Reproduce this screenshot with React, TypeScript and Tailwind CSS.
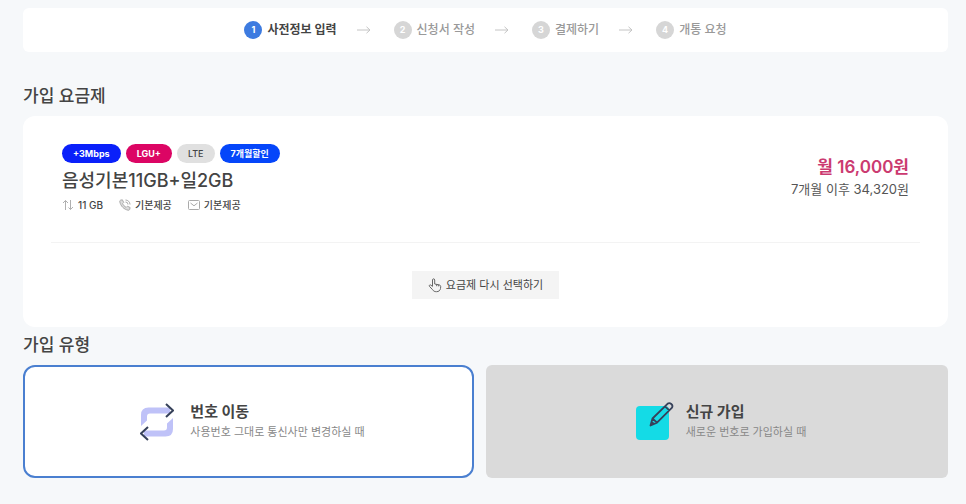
import { Fragment } from "react";
import { clsx } from "clsx";

const STEPS = ["사전정보 입력", "신청서 작성", "결제하기", "개통 요청"];

const BADGES = [
  { label: "+3Mbps", className: "bg-[#0a20fa] font-bold text-white" },
  { label: "LGU+", className: "bg-[#dc0564] font-bold text-white" },
  { label: "LTE", className: "bg-[#e0e0e0] font-medium text-[#444]" },
  { label: "7개월할인", className: "bg-[#0546fa] font-bold text-white" },
];

function StepArrow() {
  return (
    <svg
      viewBox="0 0 14 8"
      className="mr-[23px] ml-5 h-2 w-3.5 shrink-0"
      fill="none"
      stroke="#c4c4c4"
      aria-hidden="true"
    >
      <path d="M0 4h13M9.500 .8 13 4 9.500 7.200" />
    </svg>
  );
}

function DataIcon() {
  return (
    <svg viewBox="0 0 12 12" className="size-3" fill="none" stroke="#b0b0b0" aria-hidden="true">
      <path d="M3.500 11V1.500M1 4l2.500-2.500L6 4M8.500 1v9.500M6.500 8.500l2 2 2.500-2.500" />
    </svg>
  );
}

function CallIcon() {
  return (
    <svg viewBox="0 0 12 12" className="size-3" fill="none" stroke="#aaa" aria-hidden="true">
      <path
        d="M1.500 1.200 3.400.8l1.300 2.700-1.200 1.200c.8 1.600 2 2.800 3.700 3.700l1.200-1.200 2.700 1.300-.4 1.900c-.2.7-.8.9-1.500.8C5 10.500 1.600 7 .8 2.700c-.1-.7.1-1.300.7-1.500Z"
        fill="#ddd"
      />
      <path d="M6.500 1A4.500 4.500 0 0 1 11 5.500M6.500 3A2.500 2.500 0 0 1 9 5.500" />
    </svg>
  );
}

function MailIcon() {
  return (
    <svg viewBox="0 0 12 12" className="size-3" fill="none" stroke="#aaa" aria-hidden="true">
      <rect x="0.5" y="1.5" width="11" height="9" rx="1" />
      <path d="M2.500 4 6 6.800 9.500 4" />
    </svg>
  );
}

function PointerIcon() {
  return (
    <svg
      viewBox="0 0 14 16"
      className="h-4 w-3.5 shrink-0"
      fill="none"
      stroke="#666"
      strokeLinejoin="round"
      aria-hidden="true"
    >
      <path d="M4.500 9.300V3c0-1.600 2.200-1.600 2.200 0v4l4.500.9c1 .2 1.600.9 1.500 1.900l-.2 1.700c-.3 2-1.800 3.200-4 3.200-2 0-3-.6-3.900-2L1.400 9.300c-.6-1.100.7-1.900 1.600-1.100l1.500 1.400" />
      <path d="M8.700 7.400v1.800M10.700 7.800v1.600" />
    </svg>
  );
}

function TransferIcon() {
  return (
    <svg viewBox="0 0 34 38" className="h-[38px] w-[34px] shrink-0" fill="none" aria-hidden="true">
      <path d="M1 23V12q0-7.500 7.500-7.500H30v6H10q-3 0-3 3v4Z" fill="#bfc2f8" />
      <path d="M33 15v11q0 7.500-7.500 7.500H4v-6h20q3 0 3-3v-4Z" fill="#bfc2f8" />
      <path d="m26 1 7 6.500-7 6.500M8 24l-7 6.500L8 37" stroke="#36415a" strokeWidth="2" />
    </svg>
  );
}

function SignupIcon() {
  return (
    <svg viewBox="0 0 38 40" className="h-10 w-[38px] shrink-0" fill="none" aria-hidden="true">
      <rect y="4" width="33" height="34" rx="4" fill="#14dbe6" />
      <path
        d="m14.500 23.500 2-7L31.500 1.800q1.800-1.500 3.800.2t.5 3.900L21 20.700Zm2-7 4.500 4.200M29 4.300l4.300 4.100M14.500 23.500l3-3.200"
        stroke="#36415a"
        strokeWidth="1.8"
        strokeLinejoin="round"
      />
    </svg>
  );
}

export default function App() {
  return (
    <div className="min-h-screen bg-[#f6f8fa] pt-2 pr-[18px] pb-[26px] pl-[23px] font-['Inter','Noto_Sans_CJK_KR',sans-serif] text-[#444]">
      <nav className="rounded-md bg-white" aria-label="가입 단계">
        <ol className="flex h-11 items-center justify-center">
          {STEPS.map((step, i) => (
            <Fragment key={step}>
              {i > 0 && (
                <li aria-hidden="true">
                  <StepArrow />
                </li>
              )}
              <li
                className={clsx(
                  "flex items-center gap-[5px] text-xs whitespace-nowrap",
                  i === 0 ? "font-bold text-[#444]" : "font-medium text-[#999]",
                )}
                aria-current={i === 0 ? "step" : undefined}
              >
                <span
                  className={clsx(
                    "flex size-[18px] items-center justify-center rounded-full text-[9px] font-bold text-white",
                    i === 0 ? "bg-[#3d7be0]" : "bg-[#d6d6d6]",
                  )}
                >
                  {i + 1}
                </span>
                {step}
              </li>
            </Fragment>
          ))}
        </ol>
      </nav>

      <h2 className="mt-8 text-[17px] leading-6 font-medium">가입 요금제</h2>
      <section className="mt-2 rounded-xl bg-white px-7 pt-7 pb-7">
        <div className="flex items-center justify-between px-[11px] pb-[29px]">
          <div>
            <div className="flex gap-[5px]">
              {BADGES.map((badge) => (
                <span
                  key={badge.label}
                  className={clsx(
                    "rounded-full px-[11px] text-[9px] leading-[19px] whitespace-nowrap",
                    badge.className,
                  )}
                >
                  {badge.label}
                </span>
              ))}
            </div>
            <h3 className="mt-1 text-lg leading-7 font-medium">음성기본11GB+일2GB</h3>
            <ul className="mt-0.5 flex gap-4 text-[10px] leading-4 font-medium">
              <li className="flex items-center gap-1">
                <DataIcon />
                11 GB
              </li>
              <li className="flex items-center gap-1">
                <CallIcon />
                기본제공
              </li>
              <li className="flex items-center gap-1">
                <MailIcon />
                기본제공
              </li>
            </ul>
          </div>
          <div className="pb-1 text-right">
            <p className="text-[17px] leading-6 font-semibold text-[#cb3a70]">월 16,000원</p>
            <p className="text-[13px] leading-5 text-[#555]">7개월 이후 34,320원</p>
          </div>
        </div>
        <hr className="border-[#f3f3f3]" />
        <div className="flex justify-center pt-7">
          <button
            type="button"
            className="flex h-7 items-center gap-1 bg-[#f4f4f4] px-4 text-[11px] text-[#444]"
          >
            <PointerIcon />
            요금제 다시 선택하기
          </button>
        </div>
      </section>

      <fieldset>
        <legend className="pt-1.5 pb-2 text-[17px] leading-6 font-medium">가입 유형</legend>
        <div className="grid grid-cols-[451fr_462fr] gap-3">
          <label className="relative flex h-[113px] cursor-pointer items-center justify-center gap-4 rounded-xl border-2 border-[#4a7fd0] bg-white pl-2">
            <input type="radio" name="joinType" className="sr-only" defaultChecked />
            <TransferIcon />
            <span>
              <span className="block text-[15px] leading-5 font-bold">번호 이동</span>
              <span className="block text-[11px] leading-5 text-[#888]">
                사용번호 그대로 통신사만 변경하실 때
              </span>
            </span>
          </label>
          <label className="relative flex h-[113px] cursor-pointer items-center justify-center gap-3 rounded-md bg-[#dadada] pl-2">
            <input type="radio" name="joinType" className="sr-only" />
            <SignupIcon />
            <span>
              <span className="block text-[15px] leading-5 font-bold">신규 가입</span>
              <span className="block text-[11px] leading-5 text-[#888]">
                새로운 번호로 가입하실 때
              </span>
            </span>
          </label>
        </div>
      </fieldset>
    </div>
  );
}
